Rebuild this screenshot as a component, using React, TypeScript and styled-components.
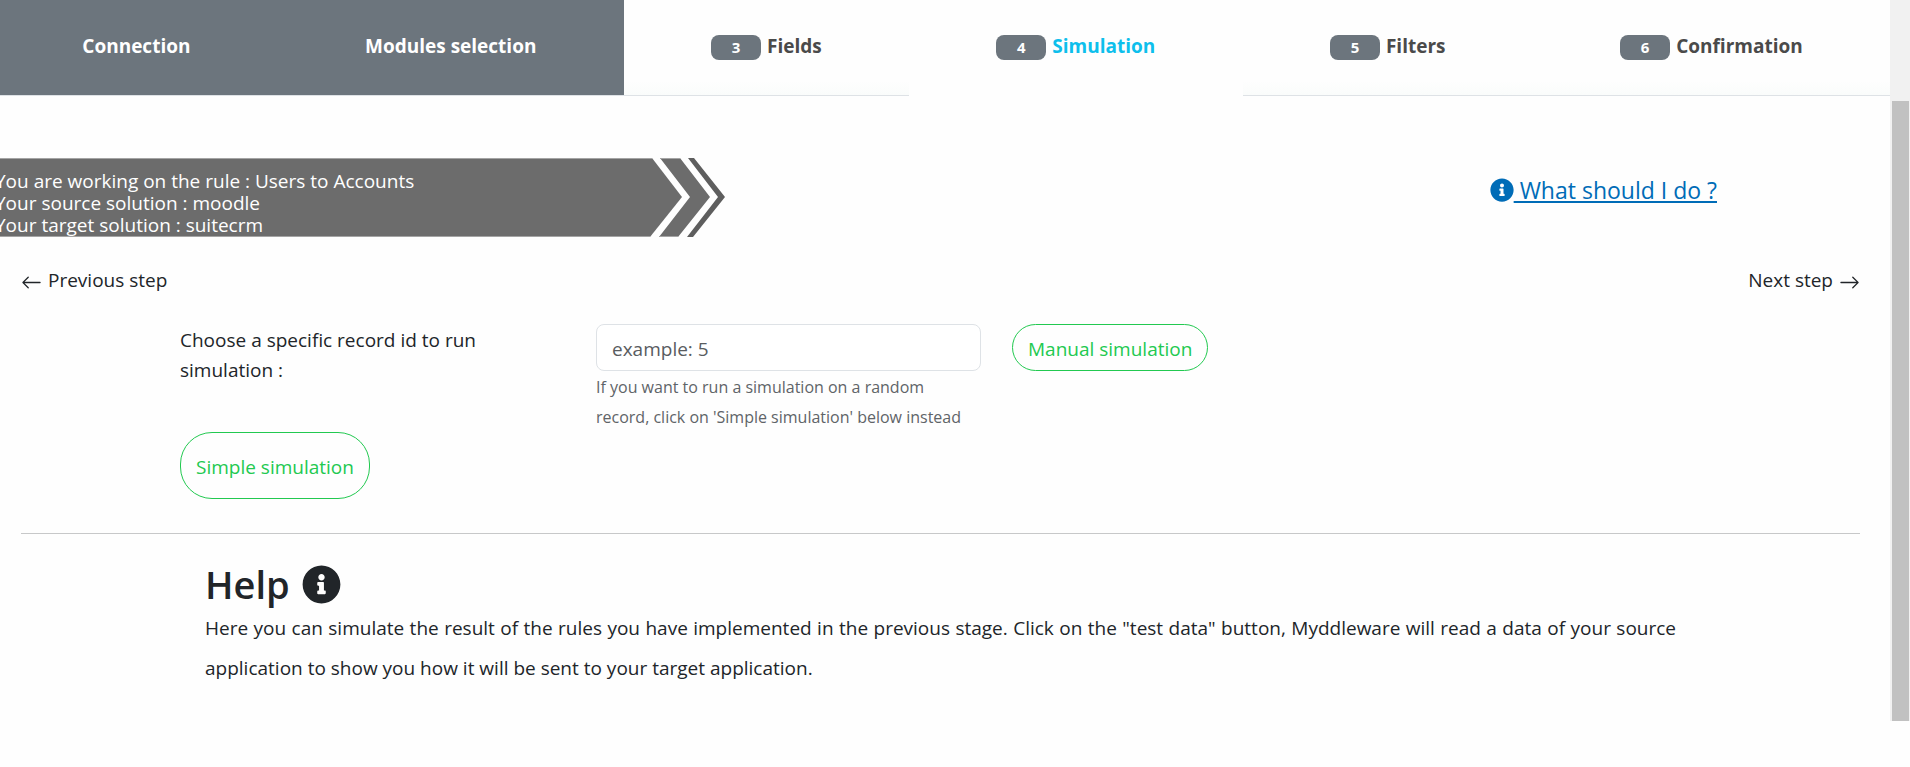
import React from "react";
import styled, { createGlobalStyle, css } from "styled-components";
import { BsArrowLeft, BsArrowRight } from "react-icons/bs";
import { FaInfoCircle } from "react-icons/fa";

const GlobalStyle = createGlobalStyle`
  *, *::before, *::after { box-sizing: border-box; }
  body {
    margin: 0;
    background: #fefefe;
    color: #212529;
    font-family: "Segoe UI", "Open Sans", "Noto Sans", sans-serif;
    font-size: 19px;
    line-height: 30px;
  }
`;

const Shell = styled.div`
  display: flex;
  min-height: 100vh;
  padding-bottom: 46px;
`;

const Page = styled.div`
  flex: 1;
  min-width: 0;
  overflow: hidden;
`;

const ScrollTrack = styled.div`
  display: flex;
  width: 20px;
  padding: 101px 1px 0 2px;
  background: #f1f1f1;
`;

const ScrollThumb = styled.div`
  flex: 1;
  background: #c1c1c1;
`;

const Steps = styled.nav`
  display: flex;
  margin-left: -5px;
`;

type StepState = "done" | "active" | "todo";

const stepLook = {
  done: css`
    background: #6c757d;
    color: #fff;
  `,
  active: css`
    border-bottom-color: transparent;
    color: #0dbfec;
  `,
  todo: css`
    background: linear-gradient(#fefefe 85%, #fafcfb);
    color: #4a4a4a;
  `,
};

const Step = styled.a<{ $state: StepState }>`
  display: flex;
  flex: 1 1 auto;
  justify-content: center;
  align-items: center;
  gap: 6px;
  height: 96px;
  padding-bottom: 4px;
  border-bottom: 1px solid #dee2e6;
  font-weight: 700;
  text-decoration: none;
  white-space: nowrap;
  ${(p) => stepLook[p.$state]}
  background-clip: padding-box;
`;

const StepNumber = styled.span`
  width: 50px;
  height: 25px;
  margin-top: 4px;
  border-radius: 8px;
  background: #6c757d;
  color: #fff;
  font-size: 15px;
  line-height: 25px;
  text-align: center;
`;

const Intro = styled.header`
  display: flex;
  justify-content: space-between;
  padding: 62px 173px 0 0;
`;

const Banner = styled.div`
  position: relative;
  display: flex;
  width: 725px;
  height: 79px;
`;

const BannerShape = styled.svg`
  position: absolute;
  inset: 0;
  width: 100%;
  height: 100%;
`;

const BannerText = styled.p`
  position: relative;
  margin: 12px 0 0 -5px;
  color: #fff;
  line-height: 22px;
`;

const HelpLink = styled.a`
  display: flex;
  align-items: center;
  height: 30px;
  margin-top: 17px;
  color: #006cb7;
  font-size: 23px;
  text-decoration: none;

  span {
    text-decoration: underline;
    text-decoration-thickness: 2px;
    text-underline-offset: 2px;
    white-space: pre;
  }
`;

const Pager = styled.nav`
  display: flex;
  justify-content: space-between;
  padding: 28px 30px 0 21px;
`;

const PagerLink = styled.a`
  display: flex;
  align-items: center;
  gap: 6px;
  color: #212529;
  text-decoration: none;

  svg {
    margin-top: 4px;
  }
`;

const Form = styled.form`
  display: grid;
  grid-template-columns: repeat(4, 1fr);
  column-gap: 31px;
  align-items: start;
  padding: 29px 77px 0 180px;
`;

const Label = styled.label`
  padding-right: 31px;
  padding-top: 1px;
`;

const RecordInput = styled.input`
  display: block;
  width: 100%;
  height: 47px;
  padding: 2px 15px 0;
  border: 1px solid #dee2e6;
  border-radius: 8px;
  background: #fff;
  color: #212529;
  font: inherit;

  &::placeholder {
    color: #595c5f;
    opacity: 1;
  }
`;

const Hint = styled.small`
  display: block;
  padding-top: 1px;
  color: #5f6468;
  font-size: 16px;
  line-height: 30px;
`;

const PillButton = styled.button<{ $tall?: boolean }>`
  justify-self: start;
  height: ${(p) => (p.$tall ? 67 : 47)}px;
  padding: 2px 15px 0;
  border: 1px solid #22c950;
  border-radius: 32px;
  background: transparent;
  color: #22c950;
  font: inherit;
  white-space: nowrap;
`;

const SimpleRow = styled.div`
  grid-column: 1 / -1;
  display: flex;
`;

const Divider = styled.hr`
  height: 1px;
  margin: 34px 30px 0 21px;
  border: 0;
  background: #c7c8c9;
`;

const HelpSection = styled.section`
  padding: 26px 214px 0 205px;
`;

const HelpTitle = styled.h1`
  display: flex;
  align-items: center;
  gap: 12px;
  margin: 0;
  font-size: 38px;
  font-weight: 600;
  line-height: 48px;
`;

const HelpText = styled.p`
  margin: 0;
  line-height: 40px;
  text-align: justify;
`;

const steps: { label: string; state: StepState; number?: number }[] = [
  { label: "Connection", state: "done" },
  { label: "Modules selection", state: "done" },
  { label: "Fields", state: "todo", number: 3 },
  { label: "Simulation", state: "active", number: 4 },
  { label: "Filters", state: "todo", number: 5 },
  { label: "Confirmation", state: "todo", number: 6 },
];

export default function App() {
  return (
    <>
      <GlobalStyle />
      <Shell>
        <Page>
          <Steps aria-label="Rule steps">
            {steps.map((step) => (
              <Step
                key={step.label}
                href="#"
                $state={step.state}
                aria-current={step.state === "active" ? "step" : undefined}
              >
                {step.number && <StepNumber>{step.number}</StepNumber>}
                {step.label}
              </Step>
            ))}
          </Steps>

          <Intro>
            <Banner>
              <BannerShape viewBox="0 0 725 79" preserveAspectRatio="none" aria-hidden="true">
                <g fill="#6c6c6c">
                  <path d="M0 0H652L682 39L650 79H0Z" />
                  <path d="M660 0H680L710 39L678 79H659L690 39Z" />
                </g>
                <path d="M688 0H694L725 39L693 79H687L718 39Z" fill="#5e5e5e" />
                <path d="M0 .5H652M0 78.5H650M660 .5H680M659 78.5H678" stroke="#a4a4a4" />
              </BannerShape>
              <BannerText>
                You are working on the rule : Users to Accounts
                <br />
                Your source solution : moodle
                <br />
                Your target solution : suitecrm
              </BannerText>
            </Banner>
            <HelpLink href="#help">
              <FaInfoCircle size={24} />
              <span> What should I do ?</span>
            </HelpLink>
          </Intro>

          <Pager aria-label="Step navigation">
            <PagerLink href="#">
              <BsArrowLeft size={21} />
              Previous step
            </PagerLink>
            <PagerLink href="#">
              Next step
              <BsArrowRight size={21} />
            </PagerLink>
          </Pager>

          <Form onSubmit={(e) => e.preventDefault()}>
            <Label htmlFor="record-id">Choose a specific record id to run simulation :</Label>
            <div>
              <RecordInput id="record-id" type="text" placeholder="example: 5" aria-describedby="record-hint" />
              <Hint id="record-hint">
                If you want to run a simulation on a random record, click on 'Simple simulation' below instead
              </Hint>
            </div>
            <PillButton type="button">Manual simulation</PillButton>
            <SimpleRow>
              <PillButton type="button" $tall>
                Simple simulation
              </PillButton>
            </SimpleRow>
          </Form>

          <Divider />

          <HelpSection id="help">
            <HelpTitle>
              Help
              <FaInfoCircle size={39} />
            </HelpTitle>
            <HelpText>
              Here you can simulate the result of the rules you have implemented in the previous stage. Click on the
              "test data" button, Myddleware will read a data of your source application to show you how it will be
              sent to your target application.
            </HelpText>
          </HelpSection>
        </Page>
        <ScrollTrack aria-hidden="true">
          <ScrollThumb />
        </ScrollTrack>
      </Shell>
    </>
  );
}
